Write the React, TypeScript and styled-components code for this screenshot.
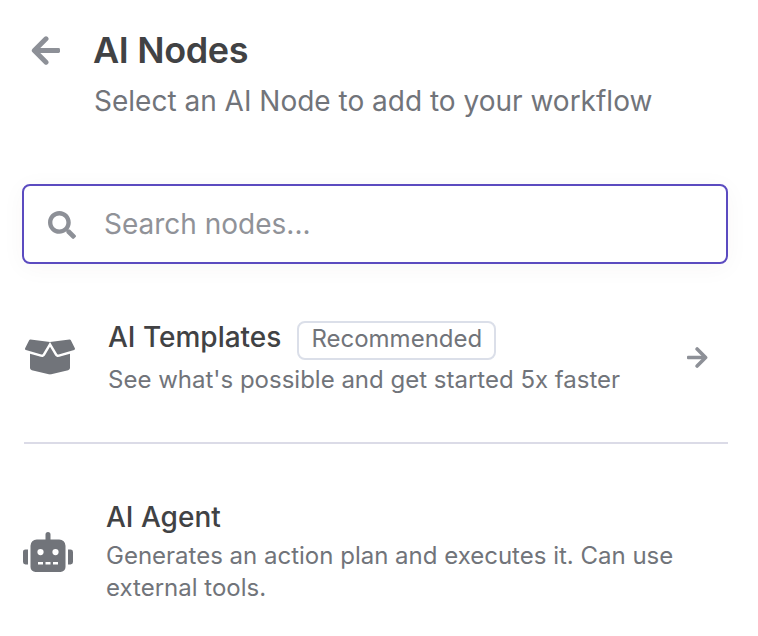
import React from 'react';
import styled, { createGlobalStyle } from 'styled-components';
import { FaSearch, FaBoxOpen, FaRobot } from 'react-icons/fa';

const GlobalStyle = createGlobalStyle`
  * { box-sizing: border-box; }
  body { margin: 0; background: #fff; font-family: Inter, sans-serif; }
  h1, h2, p { margin: 0; }
`;
const Panel = styled.main`
  width: 758px;
  height: 636px;
  overflow: hidden;
  padding: 28px 30px 0 22px;
`;
const Header = styled.header`
  display: grid;
  grid-template-columns: 72px 1fr;
  height: 156px;
  align-items: start;
`;
const BackButton = styled.button`
  border: 0;
  background: none;
  padding: 0 0 0 9px;
  color: #8d9097;
  height: 44px;
  display: flex;
  align-items: center;
`;
const Title = styled.h1`
  font-size: 36px;
  line-height: 44px;
  font-weight: 600;
  color: #414244;
  letter-spacing: -0.35px;
  margin-left: -1px;
  white-space: nowrap;
`;
const Subtitle = styled.p`
  font-size: 28px;
  line-height: 36px;
  margin-top: 11px;
  color: #71747a;
  white-space: nowrap;
`;
const SearchBox = styled.label`
  display: flex;
  align-items: center;
  height: 80px;
  border: 2px solid #5b4bc0;
  border-radius: 8px;
  padding-left: 24px;
  gap: 28px;
  color: #8d9097;
  box-shadow: 0 4px 24px rgba(68, 28, 23, 0.04);
  svg { margin-top: 2px; }
`;
const SearchInput = styled.input`
  flex: 1;
  border: 0;
  outline: 0;
  padding: 0;
  background: none;
  font: 400 28px/36px Inter, sans-serif;
  color: #71747a;
  &::placeholder { color: #909298; opacity: 1; }
`;
const TemplateRow = styled.section`
  display: grid;
  grid-template-columns: 84px 1fr 42px;
  height: 180px;
  margin-left: 2px;
  padding-top: 55px;
  border-bottom: 2px solid #dbdbe7;
  color: #71747a;
`;
const AgentRow = styled.section`
  display: grid;
  grid-template-columns: 84px 1fr;
  padding-top: 55px;
  color: #71747a;
`;
const IconSlot = styled.div<{ $top: number; $left?: number; $muted?: boolean }>`
  padding-top: ${({ $top }) => $top}px;
  padding-left: ${({ $left = 0 }) => $left}px;
  color: ${({ $muted }) => ($muted ? '#8d9097' : 'inherit')};
  svg { display: block; }
`;
const ArrowSvg = styled.svg<{ $flip?: boolean }>`
  display: block;
  flex: none;
  transform: ${({ $flip }) => ($flip ? 'scaleX(-1)' : 'none')};
`;
const NameLine = styled.div`
  display: flex;
  gap: 16px;
  height: 40px;
`;
const Name = styled.h2`
  font-size: 28px;
  line-height: 36px;
  font-weight: 500;
  color: #414244;
  white-space: nowrap;
`;
const Tag = styled.span`
  border: 2px solid #dbdfe9;
  border-radius: 8px;
  height: 39px;
  margin-top: 2px;
  padding: 0 12px;
  font-size: 24px;
  line-height: 32px;
`;
const Description = styled.p<{ $top: number }>`
  margin-top: ${({ $top }) => $top}px;
  font-size: 24px;
  line-height: 32px;
  white-space: pre-line;
`;

function Arrow({ size, flip }: { size: number; flip?: boolean }) {
  return (
    <ArrowSvg $flip={flip} width={size} height={size} viewBox="0 0 28 28" fill="none">
      <path d="M14.5 2.7 3.2 14l11.3 11.3" stroke="currentColor" strokeWidth="4.8" strokeLinecap="round" strokeLinejoin="round" />
      <rect x="4" y="11.7" width="24" height="4.6" rx="1.4" fill="currentColor" />
    </ArrowSvg>
  );
}

export default function App() {
  return (
    <>
      <GlobalStyle />
      <Panel>
        <Header>
          <BackButton aria-label="Back"><Arrow size={29} /></BackButton>
          <div>
            <Title>AI Nodes</Title>
            <Subtitle>Select an AI Node to add to your workflow</Subtitle>
          </div>
        </Header>
        <SearchBox>
          <FaSearch size={28} />
          <SearchInput placeholder="Search nodes..." />
        </SearchBox>
        <TemplateRow>
          <IconSlot $top={13} $left={1}><FaBoxOpen size={50} /></IconSlot>
          <div>
            <NameLine><Name>AI Templates</Name><Tag>Recommended</Tag></NameLine>
            <Description $top={5}>See what's possible and get started 5x faster</Description>
          </div>
          <IconSlot $top={28} $left={1} $muted><Arrow size={21} flip /></IconSlot>
        </TemplateRow>
        <AgentRow>
          <IconSlot $top={28} $left={1}><FaRobot size={50} /></IconSlot>
          <div>
            <Name>AI Agent</Name>
            <Description $top={5}>{'Generates an action plan and executes it. Can use\nexternal tools.'}</Description>
          </div>
        </AgentRow>
      </Panel>
    </>
  );
}
